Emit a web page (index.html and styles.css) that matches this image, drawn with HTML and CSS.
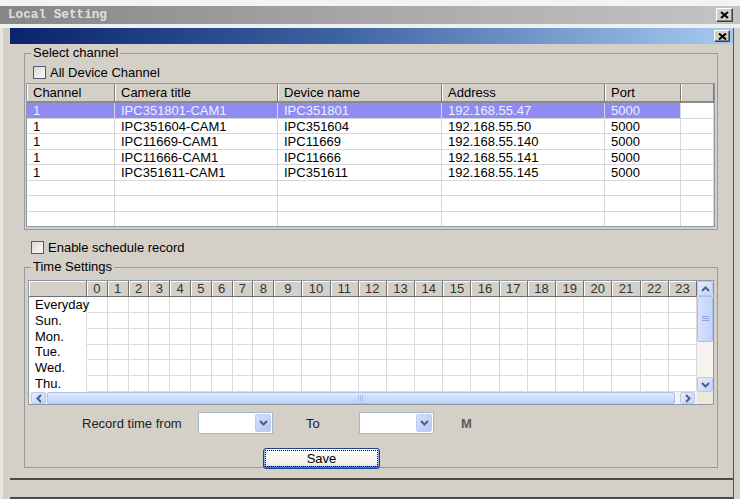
FILE: index.html
```html
<!DOCTYPE html>
<html>
<head>
<meta charset="utf-8">
<title>Local Setting</title>
<link rel="stylesheet" href="styles.css">
</head>
<body>
<div class="topstrip"></div>
<div class="titlebar">
  <span class="title">Local Setting</span>
  <button class="xbtn xbtn-top"><svg width="9" height="8" viewBox="0 0 9 8"><path d="M1 1 L8 7 M8 1 L1 7" stroke="#000" stroke-width="2" fill="none"/></svg></button>
</div>
<div class="gap"></div>
<div class="frame">
  <div class="panel">
    <div class="caption">
      <button class="xbtn xbtn-cap"><svg width="9" height="7" viewBox="0 0 9 7"><path d="M1 0.5 L8 6.5 M8 0.5 L1 6.5" stroke="#000" stroke-width="2" fill="none"/></svg></button>
    </div>
    <div class="content">
      <fieldset class="group group-channel">
        <legend>Select channel</legend>
        <label class="check"><span class="box"></span>All Device Channel</label>
        <div class="list">
          <div class="lrow lhead"><span>Channel</span><span>Camera title</span><span>Device name</span><span>Address</span><span>Port</span><span></span></div>
          <div class="lrow sel"><span>1</span><span>IPC351801-CAM1</span><span>IPC351801</span><span>192.168.55.47</span><span>5000</span><span></span></div>
          <div class="lrow"><span>1</span><span>IPC351604-CAM1</span><span>IPC351604</span><span>192.168.55.50</span><span>5000</span><span></span></div>
          <div class="lrow"><span>1</span><span>IPC11669-CAM1</span><span>IPC11669</span><span>192.168.55.140</span><span>5000</span><span></span></div>
          <div class="lrow"><span>1</span><span>IPC11666-CAM1</span><span>IPC11666</span><span>192.168.55.141</span><span>5000</span><span></span></div>
          <div class="lrow"><span>1</span><span>IPC351611-CAM1</span><span>IPC351611</span><span>192.168.55.145</span><span>5000</span><span></span></div>
          <div class="lrow"><span></span><span></span><span></span><span></span><span></span><span></span></div>
          <div class="lrow"><span></span><span></span><span></span><span></span><span></span><span></span></div>
          <div class="lrow"><span></span><span></span><span></span><span></span><span></span><span></span></div>
        </div>
      </fieldset>

      <label class="check check-sched"><span class="box"></span>Enable schedule record</label>

      <fieldset class="group group-time">
        <legend>Time Settings</legend>
        <div class="tgrid">
          <div class="tarea">
            <div class="trow thead"><span></span><span>0</span><span>1</span><span>2</span><span>3</span><span>4</span><span>5</span><span>6</span><span>7</span><span>8</span><span>9</span><span>10</span><span>11</span><span>12</span><span>13</span><span>14</span><span>15</span><span>16</span><span>17</span><span>18</span><span>19</span><span>20</span><span>21</span><span>22</span><span>23</span></div>
            <div class="trow"><span class="lbl">Everyday</span><span></span><span></span><span></span><span></span><span></span><span></span><span></span><span></span><span></span><span></span><span></span><span></span><span></span><span></span><span></span><span></span><span></span><span></span><span></span><span></span><span></span><span></span><span></span><span></span></div>
            <div class="trow"><span class="lbl">Sun.</span><span></span><span></span><span></span><span></span><span></span><span></span><span></span><span></span><span></span><span></span><span></span><span></span><span></span><span></span><span></span><span></span><span></span><span></span><span></span><span></span><span></span><span></span><span></span><span></span></div>
            <div class="trow"><span class="lbl">Mon.</span><span></span><span></span><span></span><span></span><span></span><span></span><span></span><span></span><span></span><span></span><span></span><span></span><span></span><span></span><span></span><span></span><span></span><span></span><span></span><span></span><span></span><span></span><span></span><span></span></div>
            <div class="trow"><span class="lbl">Tue.</span><span></span><span></span><span></span><span></span><span></span><span></span><span></span><span></span><span></span><span></span><span></span><span></span><span></span><span></span><span></span><span></span><span></span><span></span><span></span><span></span><span></span><span></span><span></span><span></span></div>
            <div class="trow"><span class="lbl">Wed.</span><span></span><span></span><span></span><span></span><span></span><span></span><span></span><span></span><span></span><span></span><span></span><span></span><span></span><span></span><span></span><span></span><span></span><span></span><span></span><span></span><span></span><span></span><span></span><span></span></div>
            <div class="trow"><span class="lbl">Thu.</span><span></span><span></span><span></span><span></span><span></span><span></span><span></span><span></span><span></span><span></span><span></span><span></span><span></span><span></span><span></span><span></span><span></span><span></span><span></span><span></span><span></span><span></span><span></span><span></span></div>
          </div>
          <div class="vscroll">
            <div class="sbtn"><svg width="9" height="6" viewBox="0 0 9 6"><path d="M1 5 L4.5 1.5 L8 5" fill="none" stroke="#4d6185" stroke-width="2"/></svg></div>
            <div class="vthumb"><svg width="7" height="6" viewBox="0 0 7 6"><path d="M0 0.5 H7 M0 2.5 H7 M0 4.5 H7" stroke="#8aa5e0" stroke-width="1"/></svg></div>
            <div class="vtrack"></div>
            <div class="sbtn"><svg width="9" height="6" viewBox="0 0 9 6"><path d="M1 1 L4.5 4.5 L8 1" fill="none" stroke="#4d6185" stroke-width="2"/></svg></div>
          </div>
          <div class="hscroll">
            <div class="sbtn sbtn-h"><svg width="6" height="9" viewBox="0 0 6 9"><path d="M5 1 L1.5 4.5 L5 8" fill="none" stroke="#4d6185" stroke-width="2"/></svg></div>
            <div class="hthumb"><svg width="6" height="6" viewBox="0 0 6 6"><path d="M0.5 0 V6 M2.5 0 V6 M4.5 0 V6" stroke="#a9bde8" stroke-width="1"/></svg></div>
            <div class="htrack"></div>
            <div class="sbtn sbtn-h"><svg width="6" height="9" viewBox="0 0 6 9"><path d="M1 1 L4.5 4.5 L1 8" fill="none" stroke="#4d6185" stroke-width="2"/></svg></div>
          </div>
          <div class="corner"></div>
        </div>

        <div class="timerow">
          <span class="lbl-from">Record time from</span>
          <div class="combo"><span class="combo-btn"><svg width="9" height="6" viewBox="0 0 9 6"><path d="M1 1 L4.5 4.5 L8 1" fill="none" stroke="#4d6185" stroke-width="2"/></svg></span></div>
          <span class="lbl-to">To</span>
          <div class="combo"><span class="combo-btn"><svg width="9" height="6" viewBox="0 0 9 6"><path d="M1 1 L4.5 4.5 L8 1" fill="none" stroke="#4d6185" stroke-width="2"/></svg></span></div>
          <span class="lbl-m">M</span>
        </div>
        <div class="saverow"><button class="save">Save</button></div>
      </fieldset>
    </div>
    <div class="status"></div>
  </div>
</div>
</body>
</html>
```
FILE: styles.css
```css
html, body {
  margin: 0;
}
body {
  width: 740px;
  height: 499px;
  overflow: hidden;
  background: #d4d0c8;
  font-family: "Liberation Sans", Arial, sans-serif;
  font-size: 13px;
  color: #000;
}

.topstrip {
  height: 6px;
  background: #f3f3f3;
}
.titlebar {
  height: 18px;
  display: flex;
  align-items: center;
  justify-content: space-between;
  padding: 0 7px 0 8px;
  background: linear-gradient(to right, #868686, #a8a8a8 50%, #c4c4c4);
}
.title {
  font: bold 12.7px/18px "Liberation Mono", monospace;
  color: #e0e0e0;
}
.gap {
  height: 4px;
  background: #efefef;
}

.xbtn {
  padding: 0;
  margin: 0;
  display: flex;
  align-items: center;
  justify-content: center;
  background: #d4d0c8;
  border: 1px solid;
  border-color: #ffffff #404040 #404040 #ffffff;
  box-shadow: inset -1px -1px #808080;
  box-sizing: border-box;
}
.xbtn-top {
  width: 17px;
  height: 14px;
}
.xbtn-cap {
  width: 16px;
  height: 12px;
}

.frame {
  display: flex;
  height: 471px;
  border-left: 3px solid #e7e6e1;
  box-sizing: border-box;
}
.panel {
  margin-left: 7px;
  width: 723px;
  border-right: 1px solid #555555;
  display: flex;
  flex-direction: column;
}
.caption {
  height: 16px;
  display: flex;
  align-items: center;
  justify-content: flex-end;
  padding-right: 3px;
  background: linear-gradient(to right, #0a246a, #3d62a2 45%, #a6caf0);
}
.content {
  padding-left: 14px;
}

.group {
  margin: 0;
  width: 694px;
  min-width: 0;
  box-sizing: border-box;
  border: 1px solid #9a9a9a;
}
.group legend {
  font: 13px/14px "Liberation Sans", Arial, sans-serif;
  padding: 0 2px;
}
.group-channel {
  margin-top: 2px;
  padding: 3px 2px 2px 1px;
}
.group-channel legend {
  margin-left: 5px;
}
.group-time {
  margin-top: 4px;
  padding: 6px 3px 0 3px;
}
.group-time legend {
  margin-left: 3px;
}

.check {
  display: flex;
  align-items: center;
  gap: 4px;
  height: 18px;
  padding-left: 7px;
}
.check-sched {
  margin-top: 8px;
}
.box {
  width: 13px;
  height: 13px;
  box-sizing: border-box;
  border: 1px solid #4f5d6e;
  background: linear-gradient(135deg, #d9d9d3, #fbfbfb);
}

/* channel list */
.list {
  margin-top: 2px;
  height: 144px;
  box-sizing: border-box;
  border: 1px solid #8c99a7;
  background: #fff;
  overflow: hidden;
}
.lrow {
  display: grid;
  grid-template-columns: 88px 163px 164px 163px 76px 1fr;
  height: 15.5px;
  line-height: 15px;
}
.lrow > span {
  box-sizing: border-box;
  padding-left: 6px;
  border-right: 1px solid #d7d7d7;
  border-bottom: 1px solid #d7d7d7;
  white-space: nowrap;
  overflow: hidden;
}
.lrow.lhead {
  height: 19px;
  line-height: 17px;
  background: #d4d0c8;
}
.lrow.lhead > span {
  border-right: 1px solid #7a7a7a;
  border-bottom: 2px solid #8a8a8a;
  box-shadow: inset 1px 0 #ffffff;
}
.lrow.sel > span:not(:last-child) {
  background: #8e8cf2;
  color: #eef0ff;
}

/* time grid */
.tgrid {
  height: 125px;
  box-sizing: border-box;
  border: 1px solid #8c99a7;
  background: #fff;
  display: grid;
  grid-template-columns: 668px 16px;
  grid-template-rows: 111px 12px;
}
.tarea {
  overflow: hidden;
}
.trow {
  display: grid;
  grid-template-columns: 58px repeat(9, 20.8px) repeat(15, 1fr);
  height: 15.75px;
}
.trow > span {
  box-sizing: border-box;
  border-right: 1px solid #dadada;
  border-bottom: 1px solid #dadada;
}
.trow > .lbl {
  border-bottom-color: transparent;
  padding-left: 6px;
  line-height: 15px;
  white-space: nowrap;
}
.trow.thead {
  height: 16px;
}
.trow.thead > span {
  background: #d4d0c8;
  border-right: 1px solid #6f6f6f;
  border-bottom: 1px solid #6f6f6f;
  box-shadow: inset 1px 1px #ffffff;
  text-align: center;
  line-height: 15px;
  color: #333;
}

.sbtn {
  width: 16px;
  height: 15px;
  box-sizing: border-box;
  display: flex;
  align-items: center;
  justify-content: center;
  border: 1px solid #b7c9f1;
  border-radius: 2px;
  background: linear-gradient(135deg, #e4ecfd, #c3d4fb);
}
.sbtn-h {
  width: 15px;
  height: 12px;
}
.vscroll {
  display: flex;
  flex-direction: column;
  background: #f4f3ee;
}
.vthumb {
  height: 46px;
  box-sizing: border-box;
  display: flex;
  align-items: center;
  justify-content: center;
  border: 1px solid #a9c0f0;
  border-radius: 2px;
  background: linear-gradient(to right, #d6e2fc, #c2d3fa);
}
.vtrack {
  flex: 1;
}
.hscroll {
  display: flex;
  align-items: center;
  padding: 0 2px;
  background: #f4f3ee;
}
.hthumb {
  width: 628px;
  height: 12px;
  margin-left: 1px;
  box-sizing: border-box;
  display: flex;
  align-items: center;
  justify-content: center;
  border: 1px solid #a9c0f0;
  border-radius: 2px;
  background: linear-gradient(to bottom, #dfe8fc, #bfd2f8);
}
.htrack {
  flex: 1;
}
.corner {
  background: #ece9d8;
}

/* time range row */
.timerow {
  margin-top: 7px;
  height: 22px;
  display: flex;
  align-items: center;
  padding-left: 54px;
  color: #222;
}
.lbl-from {
  width: 116px;
}
.combo {
  width: 75px;
  height: 22px;
  box-sizing: border-box;
  padding: 1px;
  display: flex;
  justify-content: flex-end;
  border: 1px solid #a7b6c8;
  background: #fff;
}
.combo-btn {
  width: 16px;
  box-sizing: border-box;
  display: flex;
  align-items: center;
  justify-content: center;
  border: 1px solid #bccdf3;
  border-radius: 2px;
  background: linear-gradient(135deg, #d5e1fc, #b4c7f5);
}
.lbl-to {
  width: 86px;
  box-sizing: border-box;
  padding-left: 33px;
}
.lbl-m {
  margin-left: 27px;
  font-weight: bold;
  color: #5a5a5a;
}

.saverow {
  display: flex;
  margin-top: 14px;
  margin-bottom: -2px;
  padding-left: 235px;
}
.save {
  width: 117px;
  height: 21px;
  padding: 0;
  font: 13px "Liberation Sans", Arial, sans-serif;
  color: #000;
  border: 1px solid #1d3f8c;
  border-radius: 3px;
  background: linear-gradient(to bottom, #ffffff, #f3f2ec 75%, #dcd8cc);
  box-shadow: inset 0 -2px 0 #4a78d0, inset 1px 0 0 #8fb0ea, inset -1px 0 0 #8fb0ea;
  outline: 1px dotted #000;
  outline-offset: -3px;
}

.status {
  margin-top: 10px;
  height: 21px;
  box-sizing: border-box;
  border-top: 2px solid #4a4a4a;
  border-bottom: 2px solid #4a4a4a;
}
```
